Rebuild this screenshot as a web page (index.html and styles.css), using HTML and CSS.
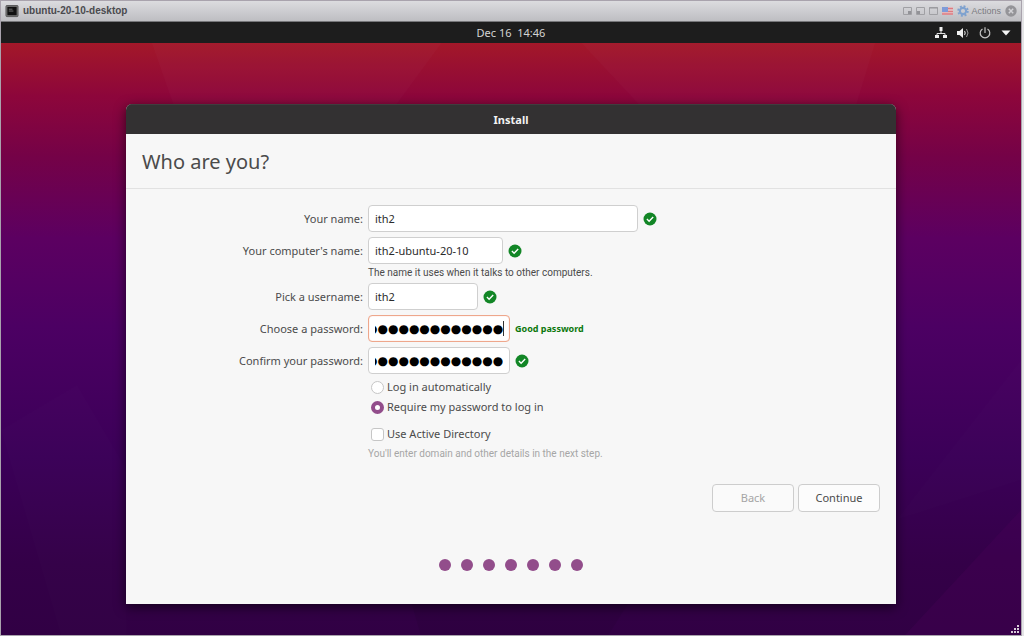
FILE: index.html
```html
<!DOCTYPE html>
<html lang="en">
<head>
<meta charset="utf-8">
<title>ubuntu-20-10-desktop</title>
<link rel="stylesheet" href="styles.css">
</head>
<body>
<svg class="defs" width="0" height="0" aria-hidden="true">
  <symbol id="ok" viewBox="0 0 14 14">
    <circle cx="7" cy="7" r="6.5" fill="#128626"/>
    <path d="M3.9 7.1 6.1 9.2 10.2 5" fill="none" stroke="#fff" stroke-width="1.4"/>
  </symbol>
</svg>
<div class="console">
  <header class="console-bar">
    <svg class="console-icon" viewBox="0 0 14 14" aria-hidden="true">
      <rect x=".5" y=".5" width="13" height="12" rx="1" fill="#777" stroke="#555"/>
      <rect x="2" y="2" width="10" height="9" fill="#111"/>
      <path d="M3.500 4.500h4M3.500 6.500h5" stroke="#777"/>
    </svg>
    <span class="console-title">ubuntu-20-10-desktop</span>
    <div class="console-tools">
      <svg width="9" height="8" viewBox="0 0 9 8" aria-hidden="true"><path d="M.5.5h8v7h-8z" fill="none" stroke="#a0a0a4"/><path d="M5 4h3v3H5z" fill="#929297"/></svg>
      <svg width="9" height="8" viewBox="0 0 9 8" aria-hidden="true"><path d="M.5.5h8v7h-8z" fill="none" stroke="#a0a0a4"/><path d="M1 4h3v3H1z" fill="#929297"/></svg>
      <svg width="9" height="8" viewBox="0 0 9 8" aria-hidden="true"><path d="M.5.5h8v7h-8z" fill="none" stroke="#a0a0a4"/><path d="M0 1h9" stroke="#96969a"/></svg>
      <svg width="11" height="8" viewBox="0 0 11 8" aria-hidden="true"><path d="M0 0h11v8H0z" fill="#e9c9cd"/><path d="M0 1.500h11M0 4.500h11M0 7h11" stroke="#db7b80" stroke-width="1.300"/><path d="M0 0h6v5H0z" fill="#7f9bd8"/></svg>
      <button class="actions" type="button">
        <svg width="12" height="12" viewBox="0 0 13 13" aria-hidden="true"><circle cx="6.500" cy="6.500" r="5.200" fill="none" stroke="#7fa2cf" stroke-width="2" stroke-dasharray="2.100 1.984"/><circle cx="6.500" cy="6.500" r="3.400" fill="none" stroke="#7fa2cf" stroke-width="2.200"/></svg>
        Actions
      </button>
      <button class="close" type="button" aria-label="Close">
        <svg width="12" height="12" viewBox="0 0 12 12" aria-hidden="true"><circle cx="6" cy="6" r="5.700" fill="#949498"/><path d="m3.800 3.800 4.400 4.400m0-4.400L3.800 8.200" stroke="#d2d2d6" stroke-width="1.500"/></svg>
      </button>
    </div>
  </header>

  <nav class="panel">
    <span class="clock">Dec 16&nbsp; 14:46</span>
    <div class="indicators">
      <svg width="12" height="12" viewBox="0 0 12 12" aria-hidden="true"><path d="M4.500 0h3v4h-3zM0 8h4v3H0zM8 8h4v3H8z" fill="#f0f0f0"/><path d="M6 4v2.500M2 8V6.500h8V8" fill="none" stroke="#e0e0e0"/></svg>
      <svg width="12" height="12" viewBox="0 0 12 12" aria-hidden="true"><path d="M0 4h2.500L6 1v10L2.500 8H0z" fill="#f0f0f0"/><path d="M7.500 4q1.500 2 0 4" fill="none" stroke="#d8d8d8" stroke-width="1.200"/><path d="M9.500 2q3 4 0 8" fill="none" stroke="#999"/></svg>
      <svg width="12" height="12" viewBox="0 0 12 12" aria-hidden="true"><path d="M3.500 1.900a4.800 4.800 0 1 0 5 0M6 .3V6" fill="none" stroke="#c4c4c4" stroke-width="1.200"/></svg>
      <svg width="10" height="6" viewBox="0 0 10 6" aria-hidden="true"><path d="M.5.5h9L5 5.500z" fill="#f5f5f5"/></svg>
    </div>
  </nav>

  <main class="desktop">
    <svg class="facets" viewBox="0 43 1021 592" preserveAspectRatio="none" aria-hidden="true">
      <g fill="#fff" fill-opacity=".02">
        <path d="M151 43h290L355 160H192z"/>
        <path d="M581 43h294L830 190 700 170z"/>
      </g>
      <g fill="#fff" fill-opacity=".008">
        <path d="M0 430 76 385 126 470v165H60z"/>
        <path d="M896 520 1021 360V480z"/>
      </g>
      <path d="M905 635 1021 510V635z" fill="#50005c" fill-opacity=".25"/>
      <path d="M410 600h220l-22 35H420z" fill="#000" fill-opacity=".05"/>
    </svg>

    <section class="window">
      <header class="window-bar">Install</header>
      <h1 class="heading">Who are you?</h1>
      <form class="form">
        <label class="label" for="name">Your name:</label>
        <div class="row"><input class="entry wide" id="name" value="ith2"><svg class="ok"><use href="#ok"/></svg></div>

        <label class="label" for="host">Your computer's name:</label>
        <div class="row"><input class="entry host" id="host" value="ith2-ubuntu-20-10"><svg class="ok"><use href="#ok"/></svg></div>
        <p class="hint">The name it uses when it talks to other computers.</p>

        <label class="label" for="user">Pick a username:</label>
        <div class="row"><input class="entry user" id="user" value="ith2"><svg class="ok"><use href="#ok"/></svg></div>

        <label class="label" for="pass">Choose a password:</label>
        <div class="row"><span class="caret"><input class="entry secret active" id="pass" value="●●●●●●●●●●●●●"></span><strong class="strength">Good password</strong></div>

        <label class="label" for="confirm">Confirm your password:</label>
        <div class="row"><input class="entry secret" id="confirm" value="●●●●●●●●●●●●●"><svg class="ok"><use href="#ok"/></svg></div>

        <div class="options">
          <label class="option"><input class="tick round" type="radio" name="login">Log in automatically</label>
          <label class="option"><input class="tick round" type="radio" name="login" checked>Require my password to log in</label>
          <label class="option directory"><input class="tick" type="checkbox">Use Active Directory</label>
        </div>
        <p class="hint faint">You'll enter domain and other details in the next step.</p>
      </form>
      <div class="buttons">
        <button class="button" type="button" disabled>Back</button>
        <button class="button" type="button">Continue</button>
      </div>
      <div class="dots"><i></i><i></i><i></i><i></i><i></i><i></i><i></i></div>
    </section>
    <svg class="grip" width="10" height="9" viewBox="0 0 10 9" aria-hidden="true"><path d="M7 0h2v2H7zM4 3h2v2H4zM7 3h2v2H7zM1 6h2v2H1zM4 6h2v2H4zM7 6h2v2H7z" fill="#d8ccd9"/></svg>
  </main>
</div>
<script src="script.js"></script>
</body>
</html>
```
FILE: styles.css
```css
* { box-sizing: border-box; }

body {
  margin: 0;
  background: #e4e4e6;
  color: #4b4b4b;
  font: 12px/16px "Noto Sans", "Open Sans", sans-serif;
}

button, input { font: inherit; color: inherit; margin: 0; }

.defs { position: absolute; }

.console {
  display: flex;
  flex-direction: column;
  min-height: 100vh;
  margin-right: 2px;
  border: 1px solid #a9a3ad;
}

.console-bar {
  display: flex;
  align-items: center;
  height: 21px;
  padding: 0 4px;
  background: linear-gradient(#dcdcdf, #bebec2);
  border-bottom: 1px solid #77777a;
  font-family: "Liberation Sans", Arial, sans-serif;
}

.console-icon { width: 14px; height: 13px; }
.console-title { margin-left: 4px; color: #4a4a4e; font-size: 10px; font-weight: bold; }
.console-tools { display: flex; align-items: center; gap: 4px; margin-left: auto; }

.actions, .close {
  display: flex;
  align-items: center;
  gap: 2px;
  padding: 0;
  border: 0;
  background: none;
  color: #7b7b80;
  font-size: 9px;
}

.panel {
  display: grid;
  grid-template-columns: 1fr auto 1fr;
  align-items: center;
  height: 21px;
  padding: 0 10px;
  background: #1d1d1d;
  color: #d4d4d4;
}

.clock { grid-column: 2; font-size: 11px; }
.indicators { display: flex; align-items: center; justify-content: flex-end; gap: 10px; }

.desktop {
  position: relative;
  flex: 1;
  padding: 61px 16px 31px;
  background: linear-gradient(#a31829, #8d063b 9%, #750247 19%, #5c0061 33%, #4c0063 48%, #3b0058 70%, #340048 88%, #310044);
}

.facets { position: absolute; inset: 0; width: 100%; height: 100%; }

.window {
  position: relative;
  display: flex;
  flex-direction: column;
  max-width: 770px;
  margin: 0 auto;
  padding-bottom: 33px;
  overflow: hidden;
  background: #f7f7f7;
  border-radius: 6px 6px 0 0;
  box-shadow: 0 3px 12px rgba(0, 0, 0, .6);
}

.window-bar {
  height: 30px;
  background: #333132;
  border-top: 1px solid #403d3f;
  color: #f2f2f2;
  font-size: 11px;
  font-weight: bold;
  line-height: 29px;
  text-align: center;
}

.heading {
  margin: 0;
  padding: 1px 16px 0;
  border-bottom: 1px solid #e2e2e2;
  font-size: 20px;
  font-weight: 400;
  line-height: 53px;
}

.form {
  display: grid;
  grid-template-columns: 237px 1fr;
  gap: 5px;
  padding: 16px 16px 0 0;
}

.label { font-size: 11px; line-height: 27px; text-align: right; }
.row { display: flex; align-items: center; gap: 5px; height: 27px; }

.entry {
  display: block;
  height: 27px;
  padding: 0 6px;
  border: 1px solid #cfcfcf;
  border-radius: 4px;
  background: #fff;
  color: #2b2b2b;
  font-size: 11px;
  outline: 0;
}

.wide { width: 270px; }
.host { width: 135px; }
.user { width: 110px; }
.secret { width: 142px; color: #000; font: 12px "DejaVu Sans", sans-serif; }
.active { border-color: #eea78c; box-shadow: inset 0 0 1px #eea78c; }

.caret { position: relative; }
.caret::after {
  content: "";
  position: absolute;
  top: 6px;
  right: 6px;
  width: 1px;
  height: 15px;
  background: #333;
}

.ok { width: 14px; height: 14px; }
.strength { color: #0c770c; font-size: 9px; }

.hint {
  grid-column: 2;
  margin: -2px 0 -1px;
  font-family: Roboto, "Noto Sans", sans-serif;
  font-size: 10px;
  line-height: 12px;
}
.faint { margin-top: -1px; color: #a6a6a6; }

.options { grid-column: 2; margin-top: -2px; padding-left: 3px; }
.option { display: flex; align-items: center; gap: 3px; height: 20px; font-size: 11px; }
.directory { margin-top: 7px; }

.tick {
  appearance: none;
  width: 13px;
  height: 13px;
  border: 1px solid #c6c6c6;
  border-radius: 3px;
  background: #fff;
}
.round { border-radius: 50%; }
.round:checked { border: 4px solid #924d8b; }

.buttons { display: flex; justify-content: flex-end; gap: 4px; padding: 25px 16px 0; }
.button {
  width: 82px;
  height: 28px;
  border: 1px solid #cdcdcd;
  border-radius: 4px;
  background: #fcfcfc;
  font-size: 11px;
}
.button:disabled { background: #fafafa; color: #a5a5a5; }

.dots { display: flex; justify-content: center; gap: 10px; padding-top: 47px; }
.dots i { width: 12px; height: 12px; border-radius: 50%; background: #924d8b; }

.grip { position: absolute; right: 1px; bottom: 1px; }
```
FILE: script.js
```js
// Keep the end of long passwords in view.
document.querySelectorAll('.secret').forEach(function (field) {
  field.scrollLeft = field.scrollWidth;
});
```
